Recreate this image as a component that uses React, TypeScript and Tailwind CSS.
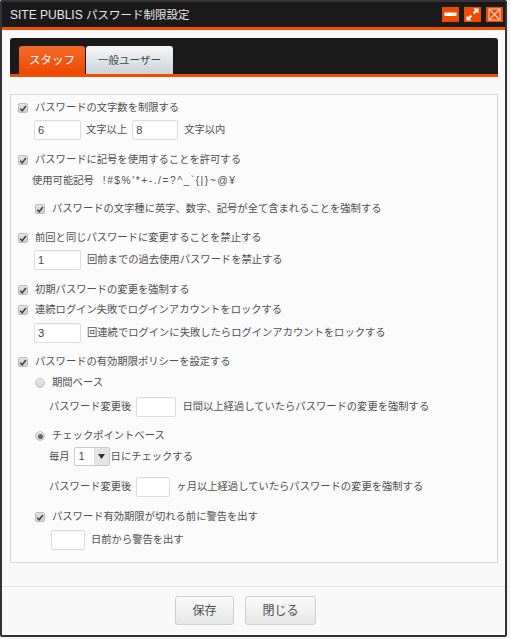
const font = { fontFamily: '"Liberation Sans","Noto Sans CJK JP",sans-serif' };

function Check({ className = "" }: { className?: string }) {
  return (
    <span className={`flex h-[10px] w-[10px] shrink-0 items-center justify-center rounded-[2px] border border-[#bdbdbd] bg-gradient-to-b from-[#e4e4e4] to-[#cfcfcf] ${className}`}>
      <svg viewBox="0 0 10 10" className="h-[9px] w-[9px]">
        <path d="M1.6 5.2 L4 7.8 L8.6 1.8" fill="none" stroke="#444" strokeWidth="1.9" />
      </svg>
    </span>
  );
}

function Radio({ on }: { on?: boolean }) {
  return (
    <span className="flex h-[10px] w-[10px] shrink-0 items-center justify-center rounded-full border border-[#c4c4c4] bg-gradient-to-b from-[#e8e8e8] to-[#d4d4d4]">
      {on && <span className="h-[5px] w-[5px] rounded-full bg-[#666]" />}
    </span>
  );
}

function Field({ w, v = "" }: { w: string; v?: string }) {
  return (
    <span className={`flex h-[20px] ${w} shrink-0 items-center rounded-[2px] border border-[#dcdcdc] bg-white pl-[3px] text-[11px] text-[#444] shadow-[inset_0_1px_1px_rgba(0,0,0,0.04)]`}>
      {v}
    </span>
  );
}

function CheckRow({ label, className = "" }: { label: string; className?: string }) {
  return (
    <div className={`flex h-[14px] items-center ${className}`}>
      <Check />
      <span className="ml-[7px]">{label}</span>
    </div>
  );
}

export default function App() {
  return (
    <div style={font} className="h-[639px] w-[510px] overflow-hidden bg-[#f4f4f4] text-[10.3px] leading-[14px] text-[#505050]">
      <div className="flex h-[637px] w-[507px] flex-col rounded-[2px] border-2 border-r-[2px] border-[#333] bg-[#f9f9f9]">
        <div className="flex h-[28px] shrink-0 items-center justify-between border-b-[3px] border-[#f04e00] bg-[#1a1a1a] pl-[8px] pr-[2px]">
          <span className="text-[12px] text-[#e8e8e8]">SITE PUBLIS <span className="text-[11.5px]">パスワード制限設定</span></span>
          <div className="flex gap-[5px]">
            <span className="flex h-[15px] w-[17px] items-center justify-center bg-[#ee4b00]">
              <svg viewBox="0 0 17 15" className="h-[15px] w-[17px]"><rect x="2.5" y="5.5" width="12" height="3.5" fill="#fff" /></svg>
            </span>
            <span className="flex h-[15px] w-[17px] items-center justify-center bg-[#ee4b00]">
              <svg viewBox="0 0 17 15" className="h-[15px] w-[17px]">
                <path d="M9.5 1.5H14.5V6.5L12.8 4.8L10.5 7.2L8.8 5.5L11.2 3.2Z M7.5 13.5H2.5V8.5L4.2 10.2L6.5 7.8L8.2 9.5L5.8 11.8Z" fill="#fff" />
              </svg>
            </span>
            <span className="flex h-[15px] w-[17px] items-center justify-center bg-[#ee4b00]">
              <svg viewBox="0 0 17 15" className="h-[15px] w-[17px]">
                <rect x="3" y="2" width="11" height="11" fill="none" stroke="#f5d5c5" strokeWidth="1" />
                <path d="M3 2L14 13M14 2L3 13" stroke="#f5d5c5" strokeWidth="1.2" />
              </svg>
            </span>
          </div>
        </div>

        <div className="flex flex-1 flex-col pl-[8px] pr-[7px]">
          <div className="mt-[8px] flex h-[39px] items-end rounded-t-[3px] border-b-[3px] border-[#f04e00] bg-[#1a1a1a] pl-[9px]">
            <div className="flex h-[28px] w-[66px] items-center justify-center rounded-t-[3px] bg-gradient-to-b from-[#f26a26] to-[#ee4700] text-[11.5px] text-white">スタッフ</div>
            <div className="ml-[1px] flex h-[28px] w-[87px] items-center justify-center rounded-t-[3px] bg-gradient-to-b from-[#f7f8f9] to-[#c9d2d9] text-[10.5px] text-[#444]">一般ユーザー</div>
          </div>

          <div className="mt-[17px] h-[469px] border border-[#d8d8d8] bg-[#fbfbfb] pl-[7px] pt-[6px]">
            <CheckRow label="パスワードの文字数を制限する" />
            <div className="mt-[5px] flex items-center pl-[16px]">
              <Field w="w-[47px]" v="6" />
              <span className="ml-[5px]">文字以上</span>
              <span className="ml-[5px]"><Field w="w-[46px]" v="8" /></span>
              <span className="ml-[6px]">文字以内</span>
            </div>

            <CheckRow label="パスワードに記号を使用することを許可する" className="mt-[13px]" />
            <div className="mt-[7px] flex pl-[14px]">
              <span>使用可能記号</span>
              <span className="ml-[9px] tracking-[1.5px]">!#$%'*+-./=?^_`{"{|}"}~@¥</span>
            </div>
            <CheckRow label="パスワードの文字種に英字、数字、記号が全て含まれることを強制する" className="mt-[14px] pl-[17px]" />

            <CheckRow label="前回と同じパスワードに変更することを禁止する" className="mt-[15px]" />
            <div className="mt-[5px] flex items-center pl-[16px]">
              <Field w="w-[47px]" v="1" />
              <span className="ml-[6px]">回前までの過去使用パスワードを禁止する</span>
            </div>

            <CheckRow label="初期パスワードの変更を強制する" className="mt-[13px]" />
            <CheckRow label="連続ログイン失敗でログインアカウントをロックする" className="mt-[6px]" />
            <div className="mt-[6px] flex items-center pl-[16px]">
              <Field w="w-[47px]" v="3" />
              <span className="ml-[6px]">回連続でログインに失敗したらログインアカウントをロックする</span>
            </div>

            <CheckRow label="パスワードの有効期限ポリシーを設定する" className="mt-[12px]" />
            <div className="mt-[7px] flex h-[14px] items-center pl-[17px]">
              <Radio />
              <span className="ml-[7px]">期間ベース</span>
            </div>
            <div className="mt-[7px] flex items-center pl-[31px]">
              <span>パスワード変更後</span>
              <span className="ml-[5px]"><Field w="w-[40px]" /></span>
              <span className="ml-[6px]">日間以上経過していたらパスワードの変更を強制する</span>
            </div>

            <div className="mt-[12px] flex h-[14px] items-center pl-[17px]">
              <Radio on />
              <span className="ml-[7px]">チェックポイントベース</span>
            </div>
            <div className="mt-[4px] flex items-center pl-[31px]">
              <span>毎月</span>
              <span className="ml-[4px] flex h-[19px] w-[36px] overflow-hidden rounded-[2px] border border-[#c8c8c8] bg-white">
                <span className="flex-1 pl-[4px] text-[11px] leading-[17px] text-[#5a3a6a]">1</span>
                <span className="flex w-[15px] items-center justify-center bg-[#e4e4e4]">
                  <svg viewBox="0 0 7 5" className="h-[5px] w-[7px]"><path d="M0 0H7L3.5 5Z" fill="#333" /></svg>
                </span>
              </span>
              <span className="ml-[1px]">日にチェックする</span>
            </div>
            <div className="mt-[11px] flex items-center pl-[31px]">
              <span>パスワード変更後</span>
              <span className="ml-[5px]"><Field w="w-[34px]" /></span>
              <span className="ml-[6px]">ヶ月以上経過していたらパスワードの変更を強制する</span>
            </div>

            <CheckRow label="パスワード有効期限が切れる前に警告を出す" className="mt-[13px] pl-[17px]" />
            <div className="mt-[6px] flex items-center pl-[33px]">
              <Field w="w-[34px]" />
              <span className="ml-[6px]">日前から警告を出す</span>
            </div>
          </div>
        </div>

        <div className="mt-[23px] flex h-[49px] shrink-0 items-start gap-[11px] border-t border-[#e4e4e4] pl-[173px] pt-[9px]">
          <button className="h-[29px] w-[59px] rounded-[3px] border border-[#cfcfcf] bg-gradient-to-b from-[#fafafa] to-[#e6e6e6] text-[12px] text-[#505050]">保存</button>
          <button className="h-[29px] w-[71px] rounded-[3px] border border-[#cfcfcf] bg-gradient-to-b from-[#fafafa] to-[#e6e6e6] text-[12px] text-[#505050]">閉じる</button>
        </div>
      </div>
    </div>
  );
}
